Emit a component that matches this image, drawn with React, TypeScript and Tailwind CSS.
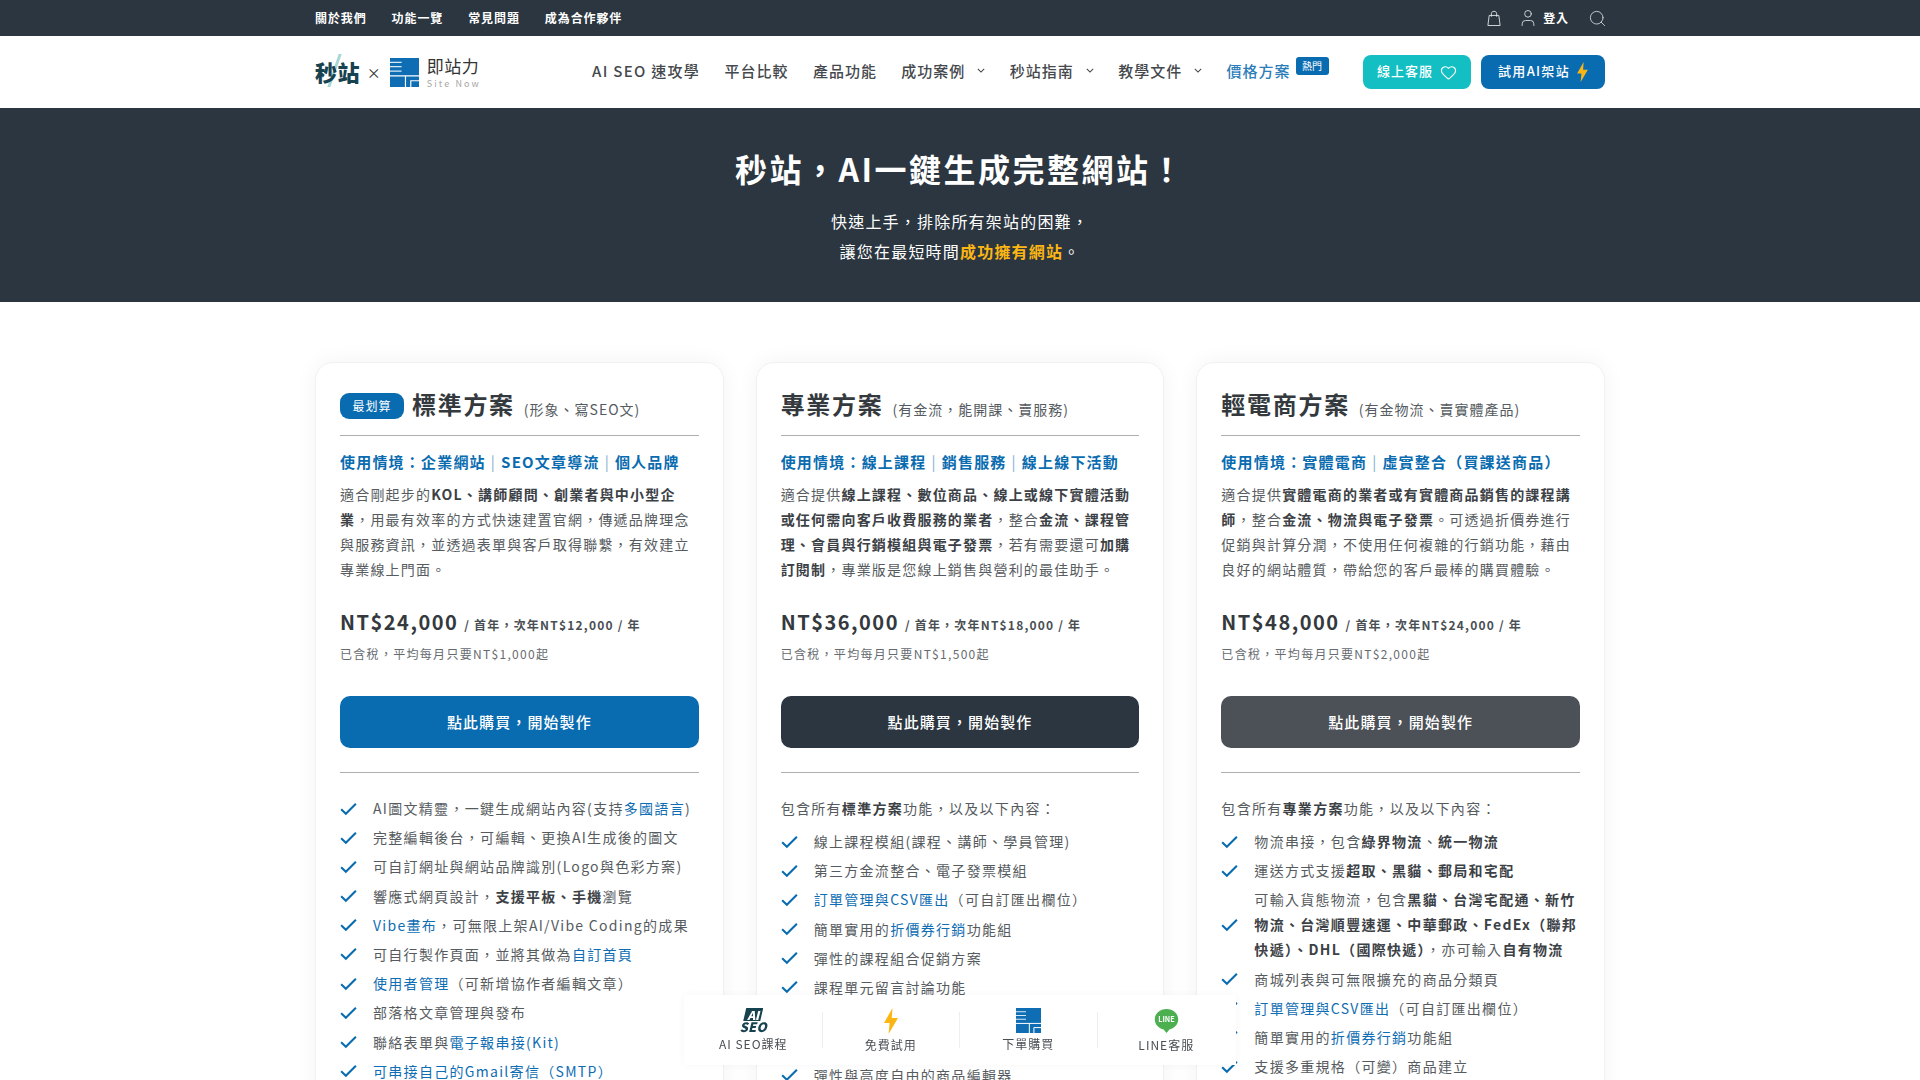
import React from "react";
import { Search, User, Heart } from "lucide-react";

const B = ({ children }: { children: React.ReactNode }) => <b className="font-bold text-[#3c4146]">{children}</b>;
const L = ({ children }: { children: React.ReactNode }) => <span className="text-[#0f6db3]">{children}</span>;

const Check = () => (
  <svg viewBox="0 0 18 14" className="w-[17px] h-[14px] shrink-0 mr-[16px]" fill="none">
    <path d="M1.2 7.2 L6.2 12 L16.8 1.4" stroke="#0a6cb0" strokeWidth="2.2" />
  </svg>
);

const Bolt = ({ className }: { className: string }) => (
  <svg viewBox="0 0 14 26" className={className}>
    <path d="M8.5 0 L0 15 L5.6 15 L4.6 26 L14 10 L7.8 10 Z" fill="#fcb614" />
  </svg>
);

const SiteNowMark = ({ className }: { className: string }) => (
  <svg viewBox="0 0 30 30" className={className}>
    <rect width="30" height="30" fill="#0f6db3" />
    <path d="M0 4.5H12M0 9H12M0 13.5H12" stroke="#d8e9f6" strokeWidth="1.2" />
    <path d="M0 18.5H30M16 18.5V30" stroke="#fff" strokeWidth="1.2" />
    <path d="M30 23.5H21.5V30" stroke="#fff" strokeWidth="1.2" fill="none" />
  </svg>
);

const Chevron = () => (
  <svg viewBox="0 0 10 6" className="w-[8px] h-[5px] ml-[12px] mb-[2px]" fill="none">
    <path d="M1 1 L5 5 L9 1" stroke="#444" strokeWidth="1.3" />
  </svg>
);

const Row = ({ children }: { children: React.ReactNode }) => (
  <li className="flex items-center">
    <Check />
    <span className="flex-1">{children}</span>
  </li>
);

type Plan = {
  badge?: boolean;
  title: string;
  sub: string;
  usage: React.ReactNode;
  desc: React.ReactNode;
  price: string;
  next: string;
  avg: string;
  btn: string;
  intro?: React.ReactNode;
  items: React.ReactNode[];
};

const Bar = () => <span className="font-normal text-[#7fb0d4] mx-[5px]">|</span>;

const plans: Plan[] = [
  {
    badge: true,
    title: "標準方案",
    sub: "(形象、寫SEO文)",
    usage: <>使用情境&#xFF1A;企業網站<Bar />SEO文章導流<Bar />個人品牌</>,
    desc: <>適合剛起步的<B>KOL、講師顧問、創業者與中小型企業</B>&#xFF0C;用最有效率的方式快速建置官網&#xFF0C;傳遞品牌理念與服務資訊&#xFF0C;並透過表單與客戶取得聯繫&#xFF0C;有效建立專業線上門面。</>,
    price: "NT$24,000",
    next: "/ 首年\uFF0C次年NT$12,000 / 年",
    avg: "已含稅\uFF0C平均每月只要NT$1,000起",
    btn: "bg-[#0a6cb0]",
    items: [
      <>AI圖文精靈&#xFF0C;一鍵生成網站內容(支持<L>多國語言</L>)</>,
      <>完整編輯後台&#xFF0C;可編輯、更換AI生成後的圖文</>,
      <>可自訂網址與網站品牌識別(Logo與色彩方案)</>,
      <>響應式網頁設計&#xFF0C;<B>支援平板、手機</B>瀏覽</>,
      <><L>Vibe畫布</L>&#xFF0C;可無限上架AI/Vibe Coding的成果</>,
      <>可自行製作頁面&#xFF0C;並將其做為<L>自訂首頁</L></>,
      <><L>使用者管理</L>&#xFF08;可新增協作者編輯文章&#xFF09;</>,
      <>部落格文章管理與發布</>,
      <>聯絡表單與<L>電子報串接(Kit)</L></>,
      <><L>可串接自己的Gmail寄信&#xFF08;SMTP&#xFF09;</L></>,
    ],
  },
  {
    title: "專業方案",
    sub: "(有金流\uFF0C能開課、賣服務)",
    usage: <>使用情境&#xFF1A;線上課程<Bar />銷售服務<Bar />線上線下活動</>,
    desc: <>適合提供<B>線上課程、數位商品、線上或線下實體活動或任何需向客戶收費服務的業者</B>&#xFF0C;整合<B>金流、課程管理、會員與行銷模組與電子發票</B>&#xFF0C;若有需要還可<B>加購訂閱制</B>&#xFF0C;專業版是您線上銷售與營利的最佳助手。</>,
    price: "NT$36,000",
    next: "/ 首年\uFF0C次年NT$18,000 / 年",
    avg: "已含稅\uFF0C平均每月只要NT$1,500起",
    btn: "bg-[#2b3640]",
    intro: <>包含所有<B>標準方案</B>功能&#xFF0C;以及以下內容&#xFF1A;</>,
    items: [
      <>線上課程模組(課程、講師、學員管理)</>,
      <>第三方金流整合、電子發票模組</>,
      <><L>訂單管理與CSV匯出</L>&#xFF08;可自訂匯出欄位&#xFF09;</>,
      <>簡單實用的<L>折價券行銷</L>功能組</>,
      <>彈性的課程組合促銷方案</>,
      <>課程單元留言討論功能</>,
      <>課程進度追蹤功能</>,
      <>數位商品銷售功能</>,
      <>彈性與高度自由的商品編輯器</>,
    ],
  },
  {
    title: "輕電商方案",
    sub: "(有金物流、賣實體產品)",
    usage: <>使用情境&#xFF1A;實體電商<Bar />虛實整合&#xFF08;買課送商品&#xFF09;</>,
    desc: <>適合提供<B>實體電商的業者或有實體商品銷售的課程講師</B>&#xFF0C;整合<B>金流、物流與電子發票</B>。可透過折價券進行促銷與計算分潤&#xFF0C;不使用任何複雜的行銷功能&#xFF0C;藉由良好的網站體質&#xFF0C;帶給您的客戶最棒的購買體驗。</>,
    price: "NT$48,000",
    next: "/ 首年\uFF0C次年NT$24,000 / 年",
    avg: "已含稅\uFF0C平均每月只要NT$2,000起",
    btn: "bg-[#4b5157]",
    intro: <>包含所有<B>專業方案</B>功能&#xFF0C;以及以下內容&#xFF1A;</>,
    items: [
      <>物流串接&#xFF0C;包含<B>綠界物流</B>、<B>統一物流</B></>,
      <>運送方式支援<B>超取、黑貓、郵局和宅配</B></>,
      <>可輸入貨態物流&#xFF0C;包含<B>黑貓、台灣宅配通、新竹物流、台灣順豐速運、中華郵政、FedEx&#xFF08;聯邦快遞&#xFF09;、DHL&#xFF08;國際快遞&#xFF09;</B>&#xFF0C;亦可輸入<B>自有物流</B></>,
      <>商城列表與可無限擴充的商品分類頁</>,
      <><L>訂單管理與CSV匯出</L>&#xFF08;可自訂匯出欄位&#xFF09;</>,
      <>簡單實用的<L>折價券行銷</L>功能組</>,
      <>支援多重規格&#xFF08;可變&#xFF09;商品建立</>,
    ],
  },
];

const Card = ({ p }: { p: Plan }) => (
  <div className="bg-white rounded-[18px] border border-[#f1f1f1] shadow-[0_0_22px_rgba(0,0,0,0.05)] px-[24px] pt-[25px] h-[900px]">
    <div className="flex items-center h-[36px] whitespace-nowrap">
      {p.badge && (
        <span className="bg-[#0a6cb0] text-white text-[12px] leading-[26px] h-[26px] w-[64px] rounded-[9px] text-center tracking-[1px] mr-[8px]">最划算</span>
      )}
      <h2 className="text-[24px] font-bold text-[#34393e] tracking-[1.7px] leading-[36px] -mt-[4px]">{p.title}</h2>
      <span className="text-[14px] text-[#555b60] tracking-[1px] ml-[9px] mt-[6px]">{p.sub}</span>
    </div>
    <div className="border-t border-[#aeb0b2] mt-[11px]" />
    <div className="text-[15px] font-bold text-[#0a6cb0] tracking-[1.2px] leading-[26px] mt-[13px] whitespace-nowrap">{p.usage}</div>
    <p className="text-[14px] leading-[25px] text-[#565b60] tracking-[1.2px] mt-[7px]">{p.desc}</p>
    <div className="flex items-baseline mt-[24px] leading-[32px] whitespace-nowrap">
      <span className="text-[20px] font-bold text-[#34393e] tracking-[1.5px]">{p.price}</span>
      <span className="text-[12px] font-bold text-[#4a4f54] tracking-[1.2px] ml-[6px]">{p.next}</span>
    </div>
    <div className="text-[12px] leading-[20px] text-[#666b70] tracking-[1.3px] mt-[3px]">{p.avg}</div>
    <div className={`${p.btn} rounded-[10px] h-[52px] mt-[32px] flex items-center justify-center text-white text-[15px] font-medium tracking-[1.1px]`}>
      點此購買&#xFF0C;開始製作
    </div>
    <div className="border-t border-[#aeb0b2] mt-[24px]" />
    <div className="text-[14px] leading-[25px] text-[#565b60] tracking-[1.3px] mt-[23px]">
      {p.intro && <p className="mb-[8px]">{p.intro}</p>}
      <ul className="flex flex-col gap-[4.2px]">
        {p.items.map((it, i) => (
          <Row key={i}>{it}</Row>
        ))}
      </ul>
    </div>
  </div>
);

const Nav = ({ text, chev, cls }: { text: string; chev?: boolean; cls?: string }) => (
  <span className={`flex items-center text-[15px] font-medium tracking-[1px] leading-[20px] -mt-[2px] whitespace-nowrap ${cls ?? "text-[#45494e]"}`}>
    {text}
    {chev && <Chevron />}
  </span>
);

const BarItem = ({ icon, label, border }: { icon: React.ReactNode; label: string; border?: boolean }) => (
  <div className={`w-[137.5px] h-[36px] flex flex-col items-center justify-start ${border ? "border-r border-[#eeeeee]" : ""}`}>
    <div className="h-[26px] -mt-[4px] flex items-center justify-center">{icon}</div>
    <div className="text-[12px] leading-[18px] tracking-[1px] text-[#4a4f54] mt-[2px] whitespace-nowrap">{label}</div>
  </div>
);

export default function App() {
  return (
    <div className="h-screen overflow-hidden relative bg-white font-['Noto_Sans_CJK_TC','Noto_Sans',sans-serif]">
      {/* top bar */}
      <div className="bg-[#2b3640] h-[36px]">
        <div className="w-[1290px] mx-auto h-full flex items-center justify-between">
          <div className="flex gap-[25px] text-[12px] font-bold text-white tracking-[0.9px]">
            <span>關於我們</span>
            <span>功能一覽</span>
            <span>常見問題</span>
            <span>成為合作夥伴</span>
          </div>
          <div className="flex items-center text-white -mr-[2px]">
            <svg viewBox="0 0 16 18" className="w-[14px] h-[17px]" fill="none" stroke="#e6e8ea" strokeWidth="1">
              <path d="M2.5 5.5H13.5L15 17H1Z" />
              <path d="M5 7V3.5C5 1.8 6.2.8 8 .8S11 1.8 11 3.5V7" />
            </svg>
            <User size={20} strokeWidth={1} className="ml-[17px] text-[#e6e8ea]" />
            <span className="text-[12px] font-bold tracking-[0.9px] ml-[5px]">登入</span>
            <Search size={19} strokeWidth={1} className="ml-[19px] text-[#e6e8ea]" />
          </div>
        </div>
      </div>

      {/* header */}
      <div className="h-[72px] bg-white">
        <div className="w-[1290px] mx-auto h-full flex items-center">
          <div className="flex items-center w-[277px] shrink-0">
            <span className="relative text-[22px] font-black leading-none tracking-[0.4px] text-[#17424f] -mt-[2px]">
              <svg viewBox="0 0 14 32" className="absolute left-[12px] -top-[6px] w-[15px] h-[33px]">
                <path d="M11 0 L0 32 L3 32 L14 0 Z" fill="#a8d8d6" />
              </svg>
              <span className="relative">秒站</span>
            </span>
            <span className="text-[14px] text-[#333] ml-[7px] mr-[9px]">×</span>
            <SiteNowMark className="w-[29px] h-[29px]" />
            <div className="ml-[8px] flex flex-col leading-none">
              <span className="text-[17px] text-[#333] tracking-[0.5px]">即站力</span>
              <span className="text-[9px] text-[#a5a5a5] tracking-[2.1px] mt-[5px]">Site Now</span>
            </div>
          </div>
          <div className="flex items-center gap-[24.4px]">
            <span className="flex items-center text-[15px] font-medium tracking-[1.3px] leading-[20px] -mt-[2px] whitespace-nowrap text-[#45494e]">AI SEO 速攻學</span>
            <Nav text="平台比較" />
            <Nav text="產品功能" />
            <Nav text="成功案例" chev />
            <Nav text="秒站指南" chev />
            <Nav text="教學文件" chev />
            <div className="flex relative">
              <Nav text="價格方案" cls="text-[#2d7db8]" />
              <span className="absolute left-[69px] -top-[6px] w-[33px] h-[18px] rounded-[3px] bg-[#0a6cb0] text-white text-[10px] leading-[18px] text-center">熱門</span>
            </div>
          </div>
          <div className="ml-auto flex gap-[10px]">
            <div className="w-[108px] h-[34px] rounded-[8px] bg-[#14bfc3] text-white text-[13px] font-medium tracking-[1px] leading-[20px] pb-[2px] flex items-center justify-center">
              線上客服
              <Heart size={17} strokeWidth={1.6} className="ml-[7px] mt-[2px]" />
            </div>
            <div className="w-[124px] h-[34px] rounded-[8px] bg-[#0a6cb0] text-white text-[13px] font-medium tracking-[1.3px] leading-[20px] pb-[2px] flex items-center justify-center">
              試用AI架站
              <Bolt className="w-[11px] h-[20px] ml-[7px] mt-[2px]" />
            </div>
          </div>
        </div>
      </div>

      {/* hero */}
      <div className="bg-[#2b3640] h-[194px] pt-[38px] text-center text-white">
        <h1 className="text-[32px] font-bold tracking-[2.5px] leading-[44px]">秒站&#xFF0C;AI一鍵生成完整網站&#xFF01;</h1>
        <p className="text-[16px] tracking-[1.2px] leading-[29.5px] mt-[17px]">
          快速上手&#xFF0C;排除所有架站的困難&#xFF0C;
          <br />
          讓您在最短時間<b className="font-bold text-[#fcb614]">成功擁有網站</b>。
        </p>
      </div>

      {/* cards */}
      <div className="w-[1290px] mx-auto grid grid-cols-3 gap-x-[32px] mt-[60px]">
        {plans.map((p) => (
          <Card key={p.title} p={p} />
        ))}
      </div>

      {/* floating bar */}
      <div className="fixed left-[684px] top-[995px] w-[552px] h-[70px] bg-white shadow-[0_0_8px_rgba(0,0,0,0.04)] flex items-center pl-[1px]">
        <BarItem
          border
          label="AI SEO課程"
          icon={
            <div className="flex flex-col items-center italic font-black leading-none">
              <span className="bg-[#17424f] text-white text-[12px] leading-[13px] w-[20px] text-center [clip-path:polygon(15%_0,100%_0,85%_100%,0_100%)]">AI</span>
              <span className="text-[#17424f] text-[13px] leading-[12px] tracking-[0.2px]">SEO</span>
            </div>
          }
        />
        <BarItem border label="免費試用" icon={<Bolt className="w-[14px] h-[26px]" />} />
        <BarItem border label="下單購買" icon={<SiteNowMark className="w-[25px] h-[25px]" />} />
        <BarItem
          label="LINE客服"
          icon={
            <svg viewBox="0 0 26 26" className="w-[25px] h-[26px]">
              <path d="M13 .5C6.2.5 .8 5 .8 11.2c0 5.7 4.6 9.8 9.2 10.6l3 3.7 3-3.7c4.6-.8 9.2-4.9 9.2-10.6C25.2 5 19.8.5 13 .5Z" fill="#4cb051" />
              <text x="13" y="14.5" textAnchor="middle" fontSize="7.5" fontWeight="700" fill="#fff">LINE</text>
            </svg>
          }
        />
      </div>
    </div>
  );
}
